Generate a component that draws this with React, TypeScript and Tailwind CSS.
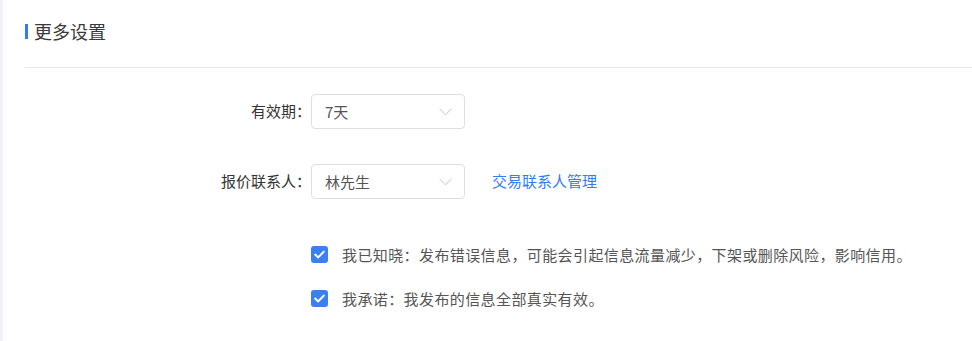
import React from "react";

const font = { fontFamily: '"Noto Sans CJK SC", "Noto Sans", sans-serif' };

function Chevron() {
  return (
    <svg width="13" height="8" viewBox="0 0 13 8" fill="none">
      <polyline points="0.5,0.8 6.5,6.8 12.5,0.8" stroke="#c0c4cc" strokeWidth="1" />
    </svg>
  );
}

function Select({ value }: { value: string }) {
  return (
    <div className="w-[154px] h-[35px] border border-[#dcdfe6] rounded-[4px] flex items-center justify-between pl-[13px] pr-[12px] bg-white">
      <span className="text-[15px] text-[#555] leading-none">{value}</span>
      <Chevron />
    </div>
  );
}

function Check({ text }: { text: string }) {
  return (
    <div className="flex items-center h-[20px]">
      <div className="w-[17px] h-[17px] rounded-[3px] bg-[#3a80f0] flex items-center justify-center">
        <svg width="11" height="9" viewBox="0 0 11 9" fill="none">
          <polyline points="1.2,4.6 4.2,7.4 9.8,1.6" stroke="white" strokeWidth="2" strokeLinecap="round" strokeLinejoin="round" />
        </svg>
      </div>
      <span className="ml-[14px] text-[15px] text-[#555] leading-none tracking-[0.4px]">{text}</span>
    </div>
  );
}

export default function App() {
  return (
    <div className="flex w-[972px] h-[341px] bg-white overflow-hidden" style={font}>
      <div className="w-[3px] shrink-0 bg-[#f0f2f5]" />
      <div className="flex-1 pl-[22px]">
        <div className="pt-[19px] h-[43px] flex items-center">
          <div className="w-[3px] h-[15px] bg-[#2f7cf6]" />
          <span className="ml-[6px] text-[18px] leading-[24px] text-[#3a3a3a]">更多设置</span>
        </div>
        <div className="mt-[24px] border-t border-[#e4e7ed]" />
        <div className="mt-[26px] flex items-center">
          <div className="w-[286px] text-right text-[15px] text-[#333]">有效期：</div>
          <Select value="7天" />
        </div>
        <div className="mt-[35px] flex items-center">
          <div className="w-[286px] text-right text-[15px] text-[#333]">报价联系人：</div>
          <Select value="林先生" />
          <span className="ml-[27px] text-[15px] text-[#2f7cf6]">交易联系人管理</span>
        </div>
        <div className="mt-[45px] ml-[286px] flex flex-col gap-[24px]">
          <Check text="我已知晓：发布错误信息，可能会引起信息流量减少，下架或删除风险，影响信用。" />
          <Check text="我承诺：我发布的信息全部真实有效。" />
        </div>
      </div>
    </div>
  );
}
